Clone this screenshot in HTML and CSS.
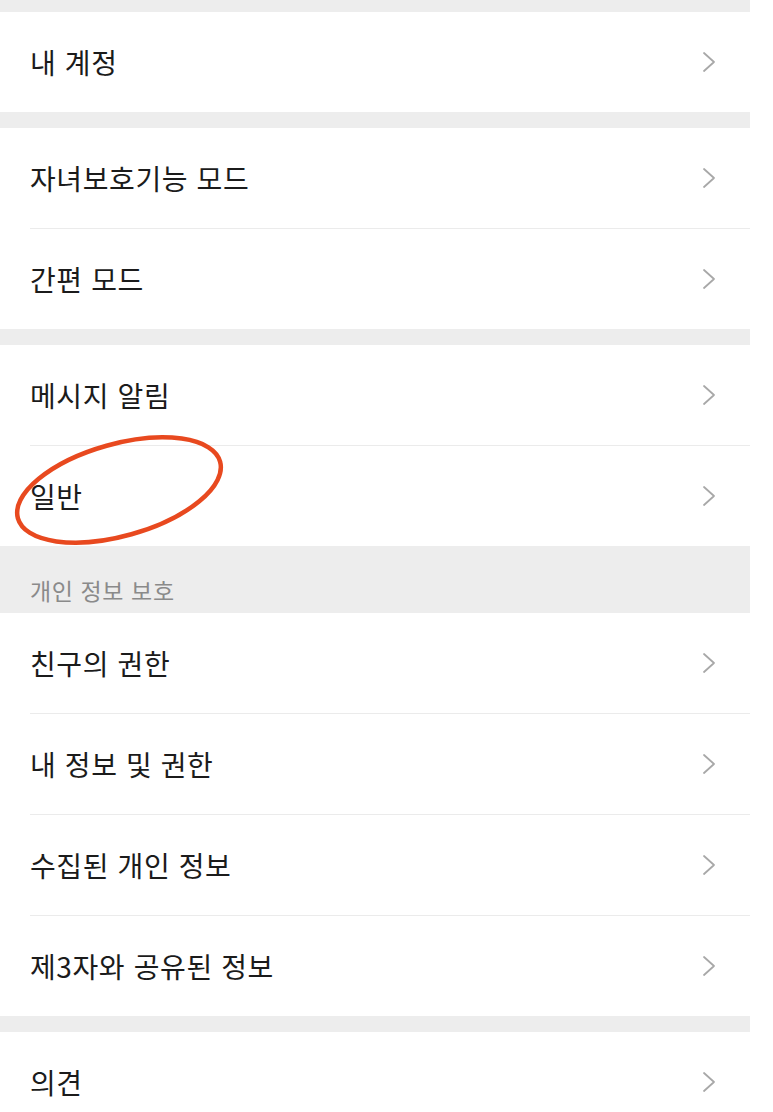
FILE: index.html
```html
<!DOCTYPE html>
<html lang="ko">
<head>
<meta charset="utf-8">
<link rel="stylesheet" href="styles.css">
</head>
<body>
<div class="page">
  <div class="gap gap-top"></div>
  <div class="group">
    <div class="row"><span class="label">내 계정</span><svg class="chev" viewBox="0 0 14 22"><polyline points="2,2 12,11 2,20"/></svg></div>
  </div>
  <div class="gap"></div>
  <div class="group">
    <div class="row"><span class="label">자녀보호기능 모드</span><svg class="chev" viewBox="0 0 14 22"><polyline points="2,2 12,11 2,20"/></svg></div>
    <div class="row"><span class="label">간편 모드</span><svg class="chev" viewBox="0 0 14 22"><polyline points="2,2 12,11 2,20"/></svg></div>
  </div>
  <div class="gap"></div>
  <div class="group">
    <div class="row"><span class="label">메시지 알림</span><svg class="chev" viewBox="0 0 14 22"><polyline points="2,2 12,11 2,20"/></svg></div>
    <div class="row"><span class="label">일반</span><svg class="chev" viewBox="0 0 14 22"><polyline points="2,2 12,11 2,20"/></svg>
      <svg class="mark" viewBox="0 0 240 130"><ellipse cx="119" cy="65" rx="105" ry="46" transform="rotate(-15.7 119 65)"/></svg>
    </div>
  </div>
  <div class="section-header">개인 정보 보호</div>
  <div class="group">
    <div class="row"><span class="label">친구의 권한</span><svg class="chev" viewBox="0 0 14 22"><polyline points="2,2 12,11 2,20"/></svg></div>
    <div class="row"><span class="label">내 정보 및 권한</span><svg class="chev" viewBox="0 0 14 22"><polyline points="2,2 12,11 2,20"/></svg></div>
    <div class="row"><span class="label">수집된 개인 정보</span><svg class="chev" viewBox="0 0 14 22"><polyline points="2,2 12,11 2,20"/></svg></div>
    <div class="row"><span class="label">제3자와 공유된 정보</span><svg class="chev" viewBox="0 0 14 22"><polyline points="2,2 12,11 2,20"/></svg></div>
  </div>
  <div class="gap"></div>
  <div class="group">
    <div class="row"><span class="label">의견</span><svg class="chev" viewBox="0 0 14 22"><polyline points="2,2 12,11 2,20"/></svg></div>
  </div>
</div>
</body>
</html>
```
FILE: styles.css
```css
html, body {
  margin: 0;
  padding: 0;
  background: #ffffff;
}
body {
  font-family: "Noto Sans CJK KR", "Noto Sans", sans-serif;
  color: #1b1b1b;
}
.page {
  width: 750px;
  background: #ffffff;
}
.gap {
  height: 16px;
  background: #ededed;
}
.gap-top {
  height: 12px;
}
.group {
  display: flex;
  flex-direction: column;
}
.row {
  position: relative;
  display: flex;
  align-items: center;
  justify-content: space-between;
  height: 100px;
  padding: 0 34px 0 30px;
}
.row + .row::before {
  content: "";
  position: absolute;
  top: -1px;
  left: 30px;
  right: 0;
  height: 1px;
  background: #ebebeb;
}
.row + .row {
  margin-top: 1px;
}
.label {
  font-size: 28px;
  line-height: 36px;
  letter-spacing: 0.6px;
}
.chev {
  width: 14px;
  height: 22px;
}
.chev polyline {
  fill: none;
  stroke: #a8a8a8;
  stroke-width: 1.8;
  stroke-linecap: round;
  stroke-linejoin: round;
}
.section-header {
  height: 67px;
  box-sizing: border-box;
  padding: 31px 30px 0;
  background: #ededed;
  color: #8a8a8a;
  font-size: 23px;
  line-height: 26px;
  letter-spacing: 0.6px;
}
.mark {
  position: absolute;
  left: 0;
  top: -21px;
  width: 240px;
  height: 130px;
  pointer-events: none;
}
.mark ellipse {
  fill: none;
  stroke: #e8491f;
  stroke-width: 4.5;
}
```
